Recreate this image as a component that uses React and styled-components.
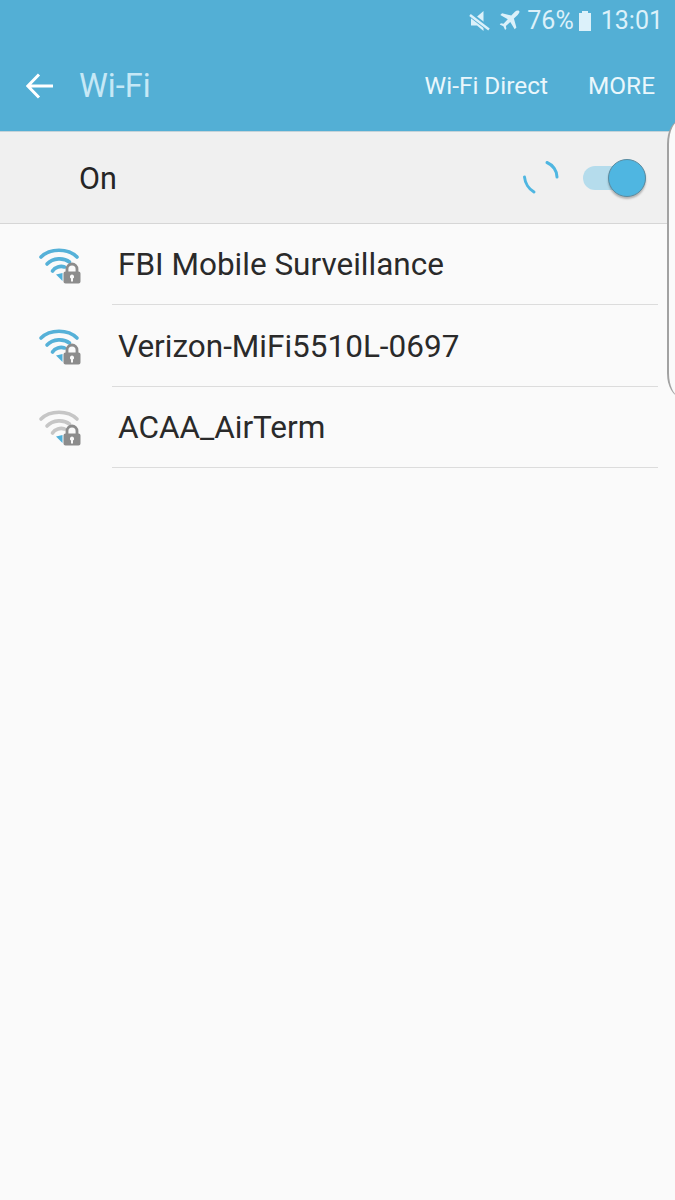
import React from 'react';
import styled, { createGlobalStyle } from 'styled-components';

const GlobalStyle = createGlobalStyle`
  html, body {
    margin: 0;
    padding: 0;
    background: #fafafa;
    font-family: Roboto, "Noto Sans", sans-serif;
  }
`;

const Page = styled.div`
  position: relative;
  width: 675px;
  height: 1200px;
  overflow: hidden;
  background: #fafafa;
`;

const Header = styled.header`
  height: 131px;
  background: #53afd5;
  border-bottom: 1px solid #c4d3d9;
`;

const StatusBar = styled.div`
  height: 41px;
  padding-right: 12px;
  display: flex;
  justify-content: flex-end;
  align-items: center;
  color: #dcf1fa;
  font-size: 25px;
`;

const StatusIcon = styled.svg`
  display: block;
  margin-right: ${(p) => p.$gap}px;
`;

const Percent = styled.span`
  margin-right: 4px;
`;

const Clock = styled.span`
  margin-left: 9px;
`;

const Toolbar = styled.div`
  height: 90px;
  display: flex;
  align-items: center;
  padding: 0 20px 0 26px;
`;

const Title = styled.h1`
  flex: 1;
  margin: 0 0 0 26px;
  font-size: 32.5px;
  font-weight: 400;
  color: #c6e8f6;
`;

const Action = styled.span`
  margin: 0 0 2px 40px;
  font-size: 24.4px;
  color: #eaf7fc;
`;

const SwitchRow = styled.div`
  height: 91px;
  display: flex;
  align-items: center;
  padding: 0 29px 0 79px;
  background: #f0f0f0;
  border-bottom: 1px solid #d6d6d6;
`;

const SwitchLabel = styled.span`
  flex: 1;
  padding-top: 2px;
  font-size: 30.5px;
  color: #252525;
`;

const Spinner = styled.svg`
  display: block;
  margin-right: 23px;
`;

const Track = styled.div`
  position: relative;
  width: 63px;
  height: 24px;
  border-radius: 12px;
  background: #b5dcec;
`;

const Thumb = styled.div`
  position: absolute;
  right: 0;
  top: -7px;
  box-sizing: border-box;
  width: 38px;
  height: 38px;
  border-radius: 50%;
  background: #4fb6e1;
  border: 1px solid #5a8ba0;
  box-shadow: 0 2px 2px rgba(0, 0, 0, 0.25);
`;

const NetworkRow = styled.div`
  height: 81.4px;
  display: flex;
  align-items: center;
  padding-left: 37px;
`;

const NetworkBody = styled.div`
  flex: 1;
  height: 100%;
  margin: 0 17px 0 31px;
  padding: 1.6px 0 0 6px;
  display: flex;
  align-items: center;
  border-bottom: 1px solid #dcdcdc;
  box-sizing: border-box;
  font-size: 31.5px;
  color: #2a2a2a;
`;

const SignalSvg = styled.svg`
  display: block;
  width: 44px;
  height: 40px;
  margin-top: 2px;
  flex-shrink: 0;
`;

const EdgeHandle = styled.div`
  position: absolute;
  top: 120px;
  right: -12px;
  box-sizing: border-box;
  width: 20px;
  height: 277px;
  border-left: 2px solid #a2a2a2;
  border-radius: 14px 0 0 14px / 24px 0 0 24px;
  background: #fafafa;
`;

const SignalIcon = ({ strong }) => {
  const arc = strong ? '#56b1d8' : '#c6c6c6';
  return (
    <SignalSvg viewBox="0 0 44 40">
      <g fill="none" stroke={arc} strokeWidth="3.6" strokeLinecap="round">
        <path d="M4 11C13 2 31 2 40 11" />
        <path d="M10 18C16 11.500 27 11.500 32.500 16" />
        <path d="M15.500 25C18 21 23.500 19.500 27.500 21" />
      </g>
      <path d="M19 28.500L25.500 27L25.500 35Z" fill="#4fb0da" />
      <path d="M30 26V23a5 5 0 0 1 10 0V26" fill="none" stroke="#8c8c8c" strokeWidth="2.800" />
      <path
        fillRule="evenodd"
        d="M28.500 25.500h13a2 2 0 0 1 2 2v8a2 2 0 0 1-2 2h-13a2 2 0 0 1-2-2v-8a2 2 0 0 1 2-2ZM35 28.500a2.200 2.200 0 0 0-1 4.100V35.500h2v-2.900a2.200 2.200 0 0 0-1-4.100Z"
        fill="#8c8c8c"
      />
    </SignalSvg>
  );
};

const networks = [
  { name: 'FBI Mobile Surveillance', strong: true },
  { name: 'Verizon-MiFi5510L-0697', strong: true },
  { name: 'ACAA_AirTerm', strong: false },
];

export default function App() {
  return (
    <Page>
      <GlobalStyle />
      <Header>
        <StatusBar>
          <StatusIcon $gap={9} width="22" height="22" viewBox="0 0 22 22">
            <path d="M15.500 1V21L9 15.500H3V7.500H8Z" fill="#dcf1fa" />
            <path d="M1 3.500L21 19" stroke="#53afd5" strokeWidth="5" />
            <path d="M2 5L21 19.500" stroke="#dcf1fa" strokeWidth="2.400" />
          </StatusIcon>
          <StatusIcon $gap={7} width="21" height="21" viewBox="0 0 24 24">
            <path
              d="M23 1.200c-1-1-3.300-.6-4.800.9L14 6.400 3.500 3.700 1.500 5.700l8.500 5-4.800 5-3-.5L.8 16.600l4.200 2 2 4.200 1.400-1.400-.5-3 5-4.800 5 8.500 2-2L17 9.800l4.300-4.200C22.800 4.100 24 2.200 23 1.200Z"
              fill="#dcf1fa"
            />
          </StatusIcon>
          <Percent>76%</Percent>
          <StatusIcon $gap={0} width="14" height="22" viewBox="0 0 14 22">
            <path d="M4 1h6v2h3v18H1V3h3Z" fill="#dcf1fa" />
          </StatusIcon>
          <Clock>13:01</Clock>
        </StatusBar>
        <Toolbar>
          <svg width="27" height="26" viewBox="0 0 27 26" fill="none" stroke="#ffffff" strokeWidth="3">
            <path d="M1.500 13H27M13 1.500L1.800 13L13 24.500" />
          </svg>
          <Title>Wi-Fi</Title>
          <Action>Wi-Fi Direct</Action>
          <Action>MORE</Action>
        </Toolbar>
      </Header>
      <SwitchRow>
        <SwitchLabel>On</SwitchLabel>
        <Spinner width="38" height="38" viewBox="0 0 38 38" fill="none" stroke="#4fb6e1" strokeWidth="3" strokeLinecap="round">
          <path d="M25 3.500C31 6 35 12 35 18" />
          <path d="M2.500 18C3 24 7 30 12 33" />
        </Spinner>
        <Track>
          <Thumb />
        </Track>
      </SwitchRow>
      {networks.map((network) => (
        <NetworkRow key={network.name}>
          <SignalIcon strong={network.strong} />
          <NetworkBody>{network.name}</NetworkBody>
        </NetworkRow>
      ))}
      <EdgeHandle />
    </Page>
  );
}
